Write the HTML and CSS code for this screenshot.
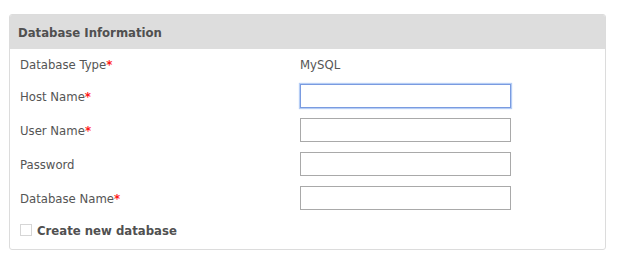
FILE: index.html
```html
<!DOCTYPE html>
<html>
<head>
<meta charset="utf-8">
<link rel="stylesheet" href="styles.css">
</head>
<body>
<div class="panel">
  <div class="panel-head">Database Information</div>
  <div class="panel-body">
    <div class="row">
      <div class="label">Database Type<span class="req">*</span></div>
      <div class="value">MySQL</div>
    </div>
    <div class="row">
      <div class="label">Host Name<span class="req">*</span></div>
      <div class="value"><input class="field focused" type="text"></div>
    </div>
    <div class="row">
      <div class="label">User Name<span class="req">*</span></div>
      <div class="value"><input class="field" type="text"></div>
    </div>
    <div class="row">
      <div class="label">Password</div>
      <div class="value"><input class="field" type="password"></div>
    </div>
    <div class="row">
      <div class="label">Database Name<span class="req">*</span></div>
      <div class="value"><input class="field" type="text"></div>
    </div>
    <label class="check-row">
      <span class="box"></span>
      <span class="check-text">Create new database</span>
    </label>
  </div>
</div>
</body>
</html>
```
FILE: styles.css
```css
html, body {
  margin: 0;
  padding: 0;
  background: #fff;
}
body {
  font-family: "DejaVu Sans Condensed", "DejaVu Sans", sans-serif;
  font-size: 13px;
  color: #555;
}
.panel {
  margin: 14px 0 0 9px;
  width: 597px;
  height: 236px;
  box-sizing: border-box;
  border: 1px solid #dcdcdc;
  border-radius: 3px;
  overflow: hidden;
}
.panel-head {
  background: #dddddd;
  height: 34px;
  display: flex;
  align-items: center;
  padding-left: 8px;
  font-weight: bold;
  color: #505050;
}
.panel-body {
  padding: 5px 0 0 10px;
  display: flex;
  flex-direction: column;
  gap: 10px;
}
.row {
  display: flex;
  align-items: center;
  min-height: 20px;
}
.label {
  width: 280px;
  flex: none;
}
.req {
  color: #ff1a1a;
  font-weight: bold;
}
.value {
  flex: 1;
}
.field {
  display: block;
  box-sizing: border-box;
  width: 211px;
  height: 24px;
  margin: 0;
  padding: 2px 4px;
  border: 1px solid #a9a9a9;
  background: #fff;
  outline: none;
  font: inherit;
}
.field.focused {
  border-color: #7a9be0;
  box-shadow: 0 0 1px 1px #b5cdf5;
}
.check-row {
  display: flex;
  align-items: center;
  height: 20px;
  gap: 5px;
}
.box {
  width: 12px;
  height: 12px;
  box-sizing: border-box;
  border: 1px solid #d6d6d6;
  background: #fff;
}
.check-text {
  font-weight: bold;
  color: #505050;
}
```
